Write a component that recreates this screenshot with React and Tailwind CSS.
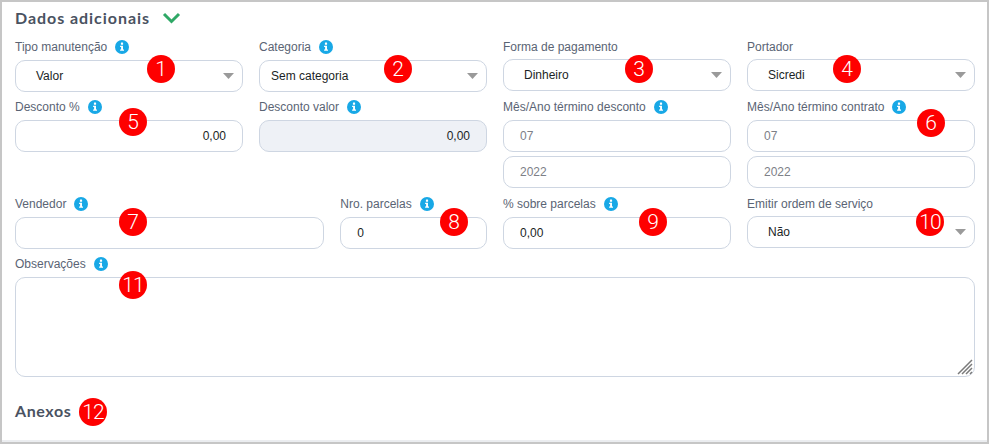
function Info() {
  return (
    <svg width="14" height="14" viewBox="0 0 14 14" className="ml-[8px] shrink-0 -translate-y-[1px]">
      <circle cx="7" cy="7" r="7" fill="#18a8e6" />
      <rect x="5.9" y="2.6" width="2.2" height="2.1" rx="0.5" fill="#fff" />
      <path d="M5.1 5.8H8v3.7h1v1.2H5.1V9.5h1V7H5.1z" fill="#fff" />
    </svg>
  );
}

function Label({ children, info = true }) {
  return (
    <div className={`flex items-center mb-[6px] text-[12px] text-[#5a6474] whitespace-nowrap ${info ? "h-[13px] leading-[13px]" : "h-[12px] leading-[12px]"}`}>
      <span>{children}</span>
      {info && <Info />}
    </div>
  );
}

function Select({ value, pad = "pl-[20px]" }) {
  return (
    <div className={`flex items-center justify-between h-[32px] rounded-[10px] border border-[#ced6e2] bg-white ${pad} pr-[8px] text-[12px] text-[#1b1f26]`}>
      <span>{value}</span>
      <svg width="11" height="6" viewBox="0 0 11 6"><path d="M0 0h11L5.5 6z" fill="#9a9a9a" /></svg>
    </div>
  );
}

function Input({ value = "", right, muted, disabled }) {
  return (
    <div
      className={`flex items-center h-[32px] rounded-[10px] border border-[#ced6e2] text-[12px] ${right ? "justify-end pr-[16px]" : "pl-[16px]"} ${muted ? "text-[#7d8087]" : "text-[#1b1f26]"} ${disabled ? "bg-[#eef1f6]" : "bg-white"}`}
    >
      {value}
    </div>
  );
}

function Badge({ n, className }) {
  return (
    <div
      className={`absolute flex items-center justify-center w-[28px] h-[28px] rounded-full bg-[#fe0000] text-white text-[21px] font-light leading-none ${n.length > 1 ? "tracking-[-1px]" : ""} ${className}`}
      style={{ fontFamily: "Roboto, sans-serif" }}
    >
      {n}
    </div>
  );
}

export default function App() {
  return (
    <div
      className="relative w-[989px] h-[444px] overflow-hidden bg-white border-[2px] border-[#c6c6c6] shadow-[inset_0_-2px_0_#ebedf0]"
      style={{ fontFamily: "'Liberation Sans', Arial, sans-serif" }}
    >
      <div className="pl-[13px] pr-[12px] pt-[7px]">
        <div className="flex items-center h-[18px] mb-[14px]">
          <h2 className="text-[16px] leading-[18px] font-bold tracking-[0.95px] text-[#4a5261]" style={{ fontFamily: "Lato, sans-serif" }}>Dados adicionais</h2>
          <svg width="19" height="12" viewBox="0 0 19 12" className="ml-[12px]">
            <path d="M2 2l7.5 7.5L17 2" fill="none" stroke="#2fa866" strokeWidth="3" />
          </svg>
        </div>

        <div className="grid grid-cols-12 gap-x-[16px]">
          <div className="col-span-3 mb-[9px]"><Label>Tipo manutenção</Label><Select value="Valor" /></div>
          <div className="col-span-3 mb-[9px]"><Label>Categoria</Label><Select value="Sem categoria" pad="pl-[11px]" /></div>
          <div className="col-span-3 mb-[9px]"><Label info={false}>Forma de pagamento</Label><Select value="Dinheiro" /></div>
          <div className="col-span-3 mb-[9px]"><Label info={false}>Portador</Label><Select value="Sicredi" /></div>

          <div className="col-span-3"><Label>Desconto %</Label><Input value="0,00" right /></div>
          <div className="col-span-3"><Label>Desconto valor</Label><Input value="0,00" right disabled /></div>
          <div className="col-span-3 mb-[10px]">
            <Label>Mês/Ano término desconto</Label>
            <div className="flex flex-col gap-[4px]"><Input value="07" muted /><Input value="2022" muted /></div>
          </div>
          <div className="col-span-3 mb-[10px]">
            <Label>Mês/Ano término contrato</Label>
            <div className="flex flex-col gap-[4px]"><Input value="07" muted /><Input value="2022" muted /></div>
          </div>

          <div className="col-span-4 mb-[9px]"><Label>Vendedor</Label><Input /></div>
          <div className="col-span-2 mb-[9px]"><Label>Nro. parcelas</Label><Input value="0" /></div>
          <div className="col-span-3 mb-[9px]"><Label>% sobre parcelas</Label><Input value="0,00" /></div>
          <div className="col-span-3 mb-[9px]"><Label info={false}>Emitir ordem de serviço</Label><Select value="Não" /></div>

          <div className="col-span-12">
            <Label>Observações</Label>
            <div className="relative h-[100px] rounded-[10px] border border-[#ced6e2] bg-white">
              <svg width="16" height="16" viewBox="0 0 16 16" className="absolute right-[1px] bottom-[1px]">
                <path d="M1 15L15 1M5 15L15 5M9 15l6-6M13 15l2-2" stroke="#7a7a7a" strokeWidth="1.5" fill="none" />
              </svg>
            </div>
          </div>
        </div>

        <h2 className="mt-[25px] text-[16px] leading-[18px] font-bold tracking-[0.6px] text-[#4a5261]" style={{ fontFamily: "Lato, sans-serif" }}>Anexos</h2>
      </div>

      <Badge n="1" className="left-[145px] top-[53px]" />
      <Badge n="2" className="left-[382px] top-[53px]" />
      <Badge n="3" className="left-[623px] top-[53px]" />
      <Badge n="4" className="left-[831px] top-[53px]" />
      <Badge n="5" className="left-[117px] top-[106px]" />
      <Badge n="6" className="left-[915px] top-[107px]" />
      <Badge n="7" className="left-[117px] top-[206px]" />
      <Badge n="8" className="left-[438px] top-[206px]" />
      <Badge n="9" className="left-[637px] top-[206px]" />
      <Badge n="10" className="left-[914px] top-[206px]" />
      <Badge n="11" className="left-[117px] top-[269px]" />
      <Badge n="12" className="left-[77px] top-[396px]" />
    </div>
  );
}
